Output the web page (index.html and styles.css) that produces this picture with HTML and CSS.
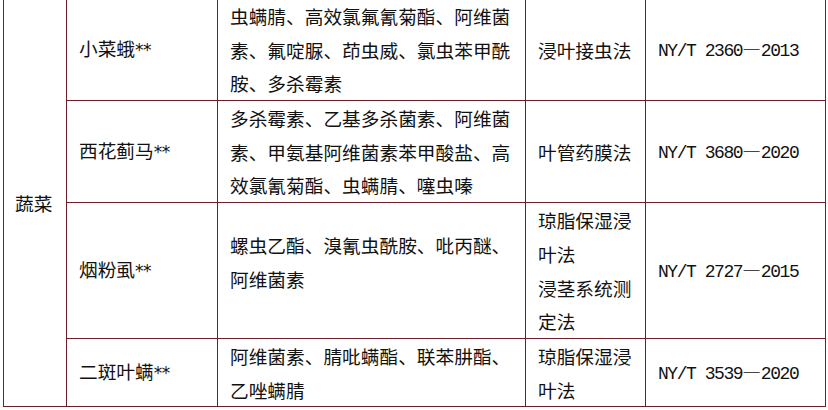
FILE: index.html
```html
<!DOCTYPE html>
<html lang="zh-CN">
<head>
<meta charset="utf-8">
<title>蔬菜抗药性监测方法</title>
<link rel="stylesheet" href="styles.css">
</head>
<body>
<table class="grid">
  <colgroup>
    <col class="c-crop">
    <col class="c-pest">
    <col class="c-agent">
    <col class="c-method">
    <col class="c-std">
  </colgroup>
  <tbody>
    <tr class="r3">
      <td class="crop" rowspan="4">蔬菜</td>
      <td>小菜蛾<span class="mark">**</span></td>
      <td>虫螨腈、高效氯氟氰菊酯、阿维菌素、氟啶脲、茚虫威、氯虫苯甲酰胺、多杀霉素</td>
      <td>浸叶接虫法</td>
      <td class="std">NY/T 2360<span class="dash">—</span>2013</td>
    </tr>
    <tr class="r3">
      <td>西花蓟马<span class="mark">**</span></td>
      <td>多杀霉素、乙基多杀菌素、阿维菌素、甲氨基阿维菌素苯甲酸盐、高效氯氰菊酯、虫螨腈、噻虫嗪</td>
      <td>叶管药膜法</td>
      <td class="std">NY/T 3680<span class="dash">—</span>2020</td>
    </tr>
    <tr class="r4">
      <td>烟粉虱<span class="mark">**</span></td>
      <td class="lift">螺虫乙酯、溴氰虫酰胺、吡丙醚、阿维菌素</td>
      <td><p class="para">琼脂保湿浸叶法</p><p class="para">浸茎系统测定法</p></td>
      <td class="std">NY/T 2727<span class="dash">—</span>2015</td>
    </tr>
    <tr class="r2">
      <td>二斑叶螨<span class="mark">**</span></td>
      <td>阿维菌素、腈吡螨酯、联苯肼酯、乙唑螨腈</td>
      <td>琼脂保湿浸叶法</td>
      <td class="std">NY/T 3539<span class="dash">—</span>2020</td>
    </tr>
  </tbody>
</table>
</body>
</html>
```

FILE: styles.css
```css
html, body {
  margin: 0;
  padding: 0;
  background: #ffffff;
}

body {
  font-family: "Noto Sans CJK SC", "Noto Sans", sans-serif;
  font-size: 18.7px;
  color: #111111;
  overflow: hidden;
}

.grid {
  border-collapse: collapse;
  table-layout: fixed;
  width: 823px;
  margin: -2px 0 0 3px;
}

.c-crop { width: 63px; }
.c-pest { width: 151px; }
.c-agent { width: 308px; }
.c-method { width: 120px; }
.c-std { width: 180px; }

.grid td {
  border: 1px solid #6e1e28;
  padding: 0 12px;
  line-height: 33.6px;
  vertical-align: middle;
  text-align: left;
}

.grid td.crop {
  padding-left: 11px;
}

.r3 { height: 102px; }
.r4 { height: 136px; }
.r2 { height: 68px; }

.grid td.lift {
  padding-bottom: 18px;
}

.para {
  margin: 0;
}

.mark {
  font-family: "DejaVu Sans", sans-serif;
  font-size: 17px;
  letter-spacing: -0.5px;
}

.std {
  font-family: "Liberation Mono", "DejaVu Sans Mono", monospace;
  font-size: 18px;
  letter-spacing: -1.45px;
  white-space: nowrap;
}

.dash {
  font-family: "Noto Sans CJK SC", sans-serif;
  font-size: 18.7px;
  letter-spacing: 0;
}
```
